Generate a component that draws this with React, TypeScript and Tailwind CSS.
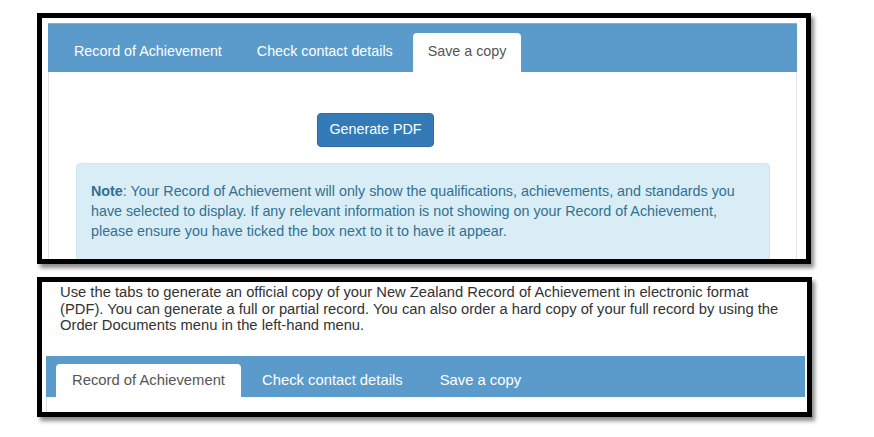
import { ReactNode } from 'react';

const font = { fontFamily: '"Liberation Sans", Arial, sans-serif' };

interface TabProps {
	label: string;
	active?: boolean;
	className?: string;
}

const Tab = ({ label, active, className }: TabProps) => (
	<div
		className={
			active
				? `flex items-center rounded-t-[4px] bg-white text-[#555] ${className ?? ''}`
				: `flex items-center text-white ${className ?? ''}`
		}
	>
		{label}
	</div>
);

const Frame = ({ children, className }: { children: ReactNode; className: string }) => (
	<div
		className={`border-[5px] border-black bg-white overflow-hidden shadow-[3px_4px_4px_rgba(0,0,0,0.45)] ${className}`}
	>
		{children}
	</div>
);

export default function App() {
	return (
		<div className="w-[874px] h-[437px] bg-white relative" style={font}>
			<div className="flex flex-col pt-[13px] pl-[37px]">
				<Frame className="w-[774px] h-[251px]">
					<div className="ml-[6px] mt-[5px] w-[749px] h-[240px] border-x border-[#e3e3e3] flex flex-col">
						<div className="h-[50px] bg-[#5b9bcb] border-t border-[#7fb1d6] flex items-end pl-[11px] gap-[5px] text-[14.3px] -mx-px">
							<Tab label="Record of Achievement" className="h-[39px] px-[15px] pb-[1px]" />
							<Tab label="Check contact details" className="h-[39px] px-[15px] pb-[1px]" />
							<Tab label="Save a copy" active className="h-[39px] px-[15px] pb-[1px]" />
						</div>
						<div className="pt-[41px] pl-[268px]">
							<button
								type="button"
								className="h-[34px] w-[117px] rounded-[4px] bg-[#337ab7] border border-[#2e6da4] text-white text-[14.3px]"
							>
								Generate PDF
							</button>
						</div>
						<div className="mt-[16px] ml-[27px] w-[694px] h-[100px] shrink-0 rounded-[4px] bg-[#d9edf7] border border-[#c9e6f1] px-[14px] pt-[17px] text-[14.3px] leading-[20px] text-[#31708f]">
							<b>Note</b>: Your Record of Achievement will only show the qualifications, achievements, and standards you
							<br />
							have selected to display. If any relevant information is not showing on your Record of Achievement,
							<br />
							please ensure you have ticked the box next to it to have it appear.
						</div>
					</div>
				</Frame>
				<Frame className="mt-[13px] w-[775px] h-[140px]">
					<p className="pl-[18px] pt-[2px] text-[14.75px] leading-[16.5px] text-[#333]">
						Use the tabs to generate an official copy of your New Zealand Record of Achievement in electronic format
						<br />
						(PDF). You can generate a full or partial record. You can also order a hard copy of your full record by using the
						<br />
						Order Documents menu in the left-hand menu.
					</p>
					<div className="mt-[22px] ml-[4px] mr-[2px] border-l border-[#e3e3e3]">
						<div className="h-[41px] bg-[#5b9bcb] flex items-end pl-[10px] gap-[5px] text-[14.8px] -ml-px">
							<Tab label="Record of Achievement" active className="h-[33px] px-[16px]" />
							<Tab label="Check contact details" className="h-[33px] px-[16px]" />
							<Tab label="Save a copy" className="h-[33px] px-[16px]" />
						</div>
						<div className="h-[15px]" />
					</div>
				</Frame>
			</div>
		</div>
	);
}
